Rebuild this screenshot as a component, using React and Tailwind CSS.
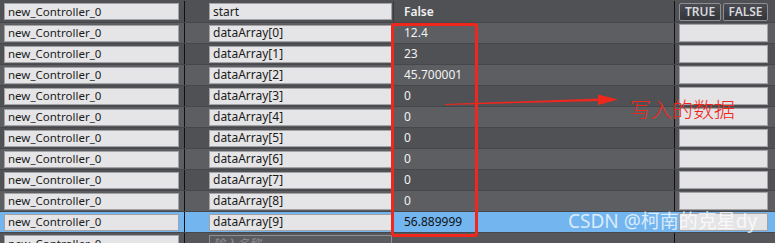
const rows = [
  { name: 'start', value: 'False' },
  { name: 'dataArray[0]', value: '12.4' },
  { name: 'dataArray[1]', value: '23' },
  { name: 'dataArray[2]', value: '45.700001' },
  { name: 'dataArray[3]', value: '0' },
  { name: 'dataArray[4]', value: '0' },
  { name: 'dataArray[5]', value: '0' },
  { name: 'dataArray[6]', value: '0' },
  { name: 'dataArray[7]', value: '0' },
  { name: 'dataArray[8]', value: '0' },
  { name: 'dataArray[9]', value: '56.889999', selected: true },
];

const font = { fontFamily: '"Noto Sans", "Noto Sans CJK SC", sans-serif' };

const Field = ({ children, className = '' }) => (
  <div
    className={`h-[17px] flex items-center px-[3px] bg-[#e5e5e7] border border-[#a3a3a5] text-[#1b1b1b] leading-none overflow-hidden whitespace-nowrap ${className}`}
  >
    {children}
  </div>
);

const Row = ({ row, index }) => {
  const bg = row.selected ? 'bg-[#72b5ef]' : index % 2 === 0 ? 'bg-[#505155]' : 'bg-[#5d5e62]';
  const h = index === 0 ? 'h-[23px] pt-[1px]' : 'h-[21px]';
  return (
    <div className={`flex ${h} border-b border-[#46474b] ${bg}`}>
      <div className="w-[184px] flex items-center pl-[4px]">
        <Field className="w-[175px] text-[11.5px]">new_Controller_0</Field>
      </div>
      <div className="w-px bg-[#111]" />
      <div className="w-[209px] flex items-center pl-[24px] pr-[1px] border-r border-[#3a3b3e]">
        <Field className="w-[183px] text-[12px]">{row.name}</Field>
      </div>
      <div
        className={`w-[280px] flex items-center pl-[10px] text-[12px] ${
          row.selected ? 'text-[#111]' : 'text-[#f2f2f2]'
        } ${index === 0 ? 'font-semibold text-[#e8e8e8]' : ''}`}
      >
        {row.value}
      </div>
      <div className={`w-px ${row.selected ? 'bg-transparent' : 'bg-[#111]'}`} />
      <div className="flex-1 flex items-center pl-[4px]">
        {index === 0 ? (
          <div className="flex gap-[2px]">
            <button className="w-[42px] h-[18px] flex items-center justify-center rounded-[2px] border border-[#8c8e93] bg-gradient-to-b from-[#4a4c52] to-[#33353a] text-[#d8d9dc] text-[12px] font-semibold leading-none">
              TRUE
            </button>
            <button className="w-[45px] h-[18px] flex items-center justify-center rounded-[2px] border border-[#8c8e93] bg-gradient-to-b from-[#4a4c52] to-[#33353a] text-[#d8d9dc] text-[12px] font-semibold leading-none">
              FALSE
            </button>
          </div>
        ) : (
          <div className="w-[89px] h-[18px] bg-[#e4e4e6] border border-[#a3a3a5]" />
        )}
      </div>
    </div>
  );
};

export default function App() {
  return (
    <div className="relative w-[775px] h-[243px] overflow-hidden bg-[#55565a]" style={font}>
      {rows.map((row, i) => (
        <Row key={i} row={row} index={i} />
      ))}

      {/* partial last row */}
      <div className="flex h-[21px] bg-[#56575b]">
        <div className="w-[184px] flex items-center pl-[4px]">
          <Field className="w-[175px] text-[11.5px]">new_Controller_0</Field>
        </div>
        <div className="w-px bg-[#111]" />
        <div className="w-[209px] flex items-center pl-[24px] pr-[1px]">
          <div className="w-[183px] h-[17px] flex items-center px-[3px] border border-[#8e8f92] bg-[#5a5b5f] text-[#8c8d90] text-[12px] italic leading-none">
            输入名称
          </div>
        </div>
        <div className="w-[280px]" />
        <div className="w-px bg-[#111]" />
      </div>

      {/* annotation: red box */}
      <div className="absolute left-[391px] top-[23px] w-[87px] h-[214px] border-[3px] border-[#f0271c] rounded-[3px]" />

      {/* annotation: arrow */}
      <svg className="absolute left-[440px] top-[90px]" width="190" height="25" viewBox="0 0 190 25">
        <polygon points="5,15 160,11 160,8.5 5,14" fill="#f0271c" />
        <polygon points="158,4.5 178,9.5 158,15" fill="#f0271c" />
      </svg>

      <div className="absolute left-[630px] top-[98px] text-[21px] leading-none text-[#f0271c] font-light" style={{ fontFamily: '"Noto Sans CJK SC", sans-serif' }}>
        写入的数据
      </div>

      {/* watermark */}
      <div className="absolute left-[568px] top-[212px] text-[19px] leading-none text-white/75" style={{ fontFamily: '"Noto Sans", "Noto Sans CJK SC", sans-serif' }}>
        CSDN @柯南的克星dy
      </div>
    </div>
  );
}
